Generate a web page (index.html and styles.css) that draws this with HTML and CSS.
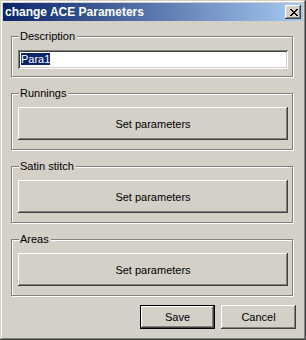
FILE: index.html
```html
<!DOCTYPE html>
<html lang="en">

<head>
    <meta charset="UTF-8">
    <meta name="viewport" content="width=device-width, initial-scale=1.0">
    <title>change ACE Parameters</title>
    <link rel="stylesheet" href="styles.css">
</head>

<body>
    <div class="window">
        <!-- title bar -->
        <div class="titlebar">
            <span class="title">change ACE Parameters</span>
            <button class="close">
                <svg width="8" height="7" viewBox="0 0 8 7">
                    <path d="M0 0h2v1h1v1h2v-1h1v-1h2v1h-1v1h-1v1h-1v1h1v1h1v1h1v1h-2v-1h-1v-1h-2v1h-1v1h-2v-1h1v-1h1v-1h1v-1h-1v-1h-1v-1h-1z" fill="#000" />
                </svg>
            </button>
        </div>

        <div class="content">
            <div class="group group-desc">
                <span class="legend">Description</span>
                <div class="field"><span class="selected">Para1</span></div>
            </div>
            <div class="group">
                <span class="legend">Runnings</span>
                <button class="btn btn-wide">Set parameters</button>
            </div>
            <div class="group">
                <span class="legend">Satin stitch</span>
                <button class="btn btn-wide">Set parameters</button>
            </div>
            <div class="group">
                <span class="legend">Areas</span>
                <button class="btn btn-wide">Set parameters</button>
            </div>

            <div class="footer">
                <button class="btn btn-small btn-default">Save</button>
                <button class="btn btn-small">Cancel</button>
            </div>
        </div>
    </div>
</body>

</html>
```

FILE: styles.css
```css
* {
    margin: 0;
    padding: 0;
    box-sizing: border-box;
}

body {
    background: #d4d0c8;
    font-family: "Liberation Sans", Arial, sans-serif;
    font-size: 11px;
    color: #000;
}

.window {
    width: 306px;
    height: 340px;
    padding: 3px;
    background: #d4d0c8;
    box-shadow: inset -1px -1px #404040, inset 1px 1px #d4d0c8,
        inset -2px -2px #808080, inset 2px 2px #fff;
}

.titlebar {
    height: 18px;
    display: flex;
    align-items: center;
    justify-content: space-between;
    padding: 0 2px 0 2px;
    background: linear-gradient(to right, #0a246a, #a6caf0);
}

.title {
    color: #fff;
    font-weight: bold;
    font-size: 12px;
}

.close {
    width: 16px;
    height: 14px;
    border: none;
    background: #d4d0c8;
    display: flex;
    align-items: center;
    justify-content: center;
    padding-left: 1px;
    box-shadow: inset -1px -1px #404040, inset 1px 1px #fff,
        inset -2px -2px #808080;
}

.content {
    padding: 15px 7px 0 8px;
}

.group {
    position: relative;
    width: 282px;
    height: 57px;
    margin-bottom: 16px;
    padding: 13px 4px 0 6px;
    border: 1px solid #808080;
    box-shadow: inset 1px 1px #fff, 1px 1px #fff;
}

.group-desc {
    height: 41px;
}

.legend {
    position: absolute;
    top: -7px;
    left: 7px;
    padding: 0 2px 0 1px;
    background: #d4d0c8;
    line-height: 13px;
}

.field {
    height: 19px;
    width: 270px;
    background: #fff;
    padding: 2px 0 0 3px;
    line-height: 14px;
    box-shadow: inset 1px 1px #808080, inset -1px -1px #fff,
        inset 2px 2px #404040, inset -2px -2px #d4d0c8;
}

.selected {
    background: #0a246a;
    color: #fff;
}

.btn {
    border: none;
    background: #d4d0c8;
    font-family: inherit;
    font-size: 11px;
    color: #000;
    box-shadow: inset -1px -1px #404040, inset 1px 1px #fff,
        inset -2px -2px #808080;
}

.btn-wide {
    width: 270px;
    height: 33px;
}

.footer {
    display: flex;
    justify-content: flex-end;
    gap: 6px;
    margin-top: -7px;
}

.btn-small {
    width: 75px;
    height: 24px;
}

.btn-default {
    box-shadow: inset 0 0 0 1px #000, inset -2px -2px #404040,
        inset 2px 2px #fff, inset -3px -3px #808080;
}
```
